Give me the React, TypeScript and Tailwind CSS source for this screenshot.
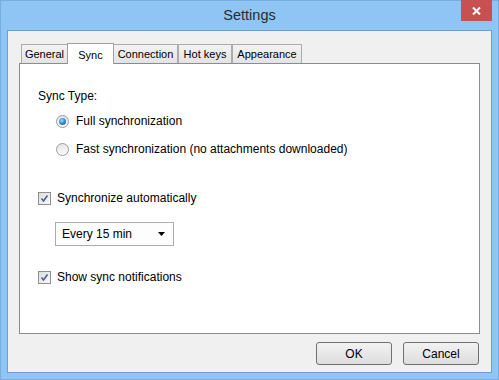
import { useState } from 'react';

const TABS = [
  { id: 'general', label: 'General', w: 'w-[47px]' },
  { id: 'sync', label: 'Sync', w: 'w-[47px]' },
  { id: 'connection', label: 'Connection', w: 'w-[65px]' },
  { id: 'hotkeys', label: 'Hot keys', w: 'w-[54px]' },
  { id: 'appearance', label: 'Appearance', w: 'w-[70px]' },
];

function Radio({ checked }: { checked: boolean }) {
  return (
    <span className="flex h-[13px] w-[13px] items-center justify-center rounded-full border border-[#9a9a9a] bg-gradient-to-b from-[#e6e6e6] to-[#fbfbfb]">
      {checked && (
        <span className="h-[7px] w-[7px] rounded-full bg-[radial-gradient(circle_at_40%_35%,#8fdcfa,#2a86cc_55%,#0d4d8c)]" />
      )}
    </span>
  );
}

function Checkbox({ checked }: { checked: boolean }) {
  return (
    <span className="flex h-[13px] w-[13px] items-center justify-center border border-[#8f8f8f] bg-gradient-to-br from-[#dcdcdc] to-[#fafafa]">
      {checked && (
        <svg width="9" height="9" viewBox="0 0 9 9">
          <path d="M1.5 4.5 L3.5 7 L7.5 1.5" fill="none" stroke="#4a5f94" strokeWidth="1.6" />
        </svg>
      )}
    </span>
  );
}

export default function App() {
  const [tab, setTab] = useState('sync');
  const [full, setFull] = useState(true);
  const [auto, setAuto] = useState(true);
  const [notify, setNotify] = useState(true);

  return (
    <div className="flex h-[380px] w-[499px] flex-col border border-[#79acdf] bg-[#8ec5f5] font-['Liberation_Sans',Arial,sans-serif] text-[12px] text-black">
      <div className="relative flex h-[29px] shrink-0 items-center justify-center">
        <span className="text-[14.5px] text-[#2b2b2b]">Settings</span>
        <button className="absolute right-[6px] top-[-1px] flex h-[21px] w-[31px] items-center justify-center bg-[#c75050]">
          <svg width="9" height="8" viewBox="0 0 9 8">
            <path d="M1 0.5 L8 7.5 M8 0.5 L1 7.5" stroke="white" strokeWidth="2" />
          </svg>
        </button>
      </div>

      <div className="mx-[6px] flex h-[343px] flex-col border border-[#6d9dd1] bg-[#f0f0f0] px-[11px] pt-[11px]">
        <div className="ml-[2px] flex h-[21px] items-end">
          {TABS.map((t) =>
            t.id === tab ? (
              <button
                key={t.id}
                onClick={() => setTab(t.id)}
                className={`relative z-10 -mb-px -mx-px flex h-[21px] items-start justify-center border border-b-0 border-[#a0a0a0] bg-white pt-[3px] text-[11px] ${t.w}`}
              >
                {t.label}
              </button>
            ) : (
              <button
                key={t.id}
                onClick={() => setTab(t.id)}
                className={`flex h-[19px] items-center justify-center border border-b-0 border-[#acacac] bg-gradient-to-b from-[#f3f3f3] to-[#e3e3e3] text-[11px] ${t.w}`}
              >
                {t.label}
              </button>
            ),
          )}
        </div>

        <div className="flex h-[271px] flex-col border border-[#898c95] bg-white pl-[18px] pt-[25px]">
          <div className="leading-[14px]">Sync Type:</div>

          <label className="ml-[18px] mt-[10px] flex h-[16px] items-center gap-[7px]" onClick={() => setFull(true)}>
            <Radio checked={full} />
            <span>Full synchronization</span>
          </label>
          <label className="ml-[18px] mt-[12px] flex h-[16px] items-center gap-[7px]" onClick={() => setFull(false)}>
            <Radio checked={!full} />
            <span>Fast synchronization (no attachments downloaded)</span>
          </label>

          <label className="mt-[33px] flex h-[16px] items-center gap-[6px]" onClick={() => setAuto(!auto)}>
            <Checkbox checked={auto} />
            <span>Synchronize automatically</span>
          </label>

          <div className="ml-[17px] mt-[16px] flex h-[24px] w-[119px] items-center justify-between border border-[#acacac] bg-[#fdfdfd] pl-[6px] pr-[8px]">
            <span>Every 15 min</span>
            <svg width="7" height="4" viewBox="0 0 7 4">
              <path d="M0 0 H7 L3.5 4 Z" fill="#000" />
            </svg>
          </div>

          <label className="mt-[23px] flex h-[16px] items-center gap-[6px]" onClick={() => setNotify(!notify)}>
            <Checkbox checked={notify} />
            <span>Show sync notifications</span>
          </label>
        </div>

        <div className="mt-[8px] flex justify-end gap-[11px] pr-[1px]">
          <button className="flex h-[23px] w-[76px] items-center justify-center rounded-[3px] border border-[#707070] bg-gradient-to-b from-[#f2f2f2] to-[#dddddd]">
            OK
          </button>
          <button className="flex h-[23px] w-[76px] items-center justify-center rounded-[3px] border border-[#707070] bg-gradient-to-b from-[#f2f2f2] to-[#dddddd]">
            Cancel
          </button>
        </div>
      </div>
    </div>
  );
}
